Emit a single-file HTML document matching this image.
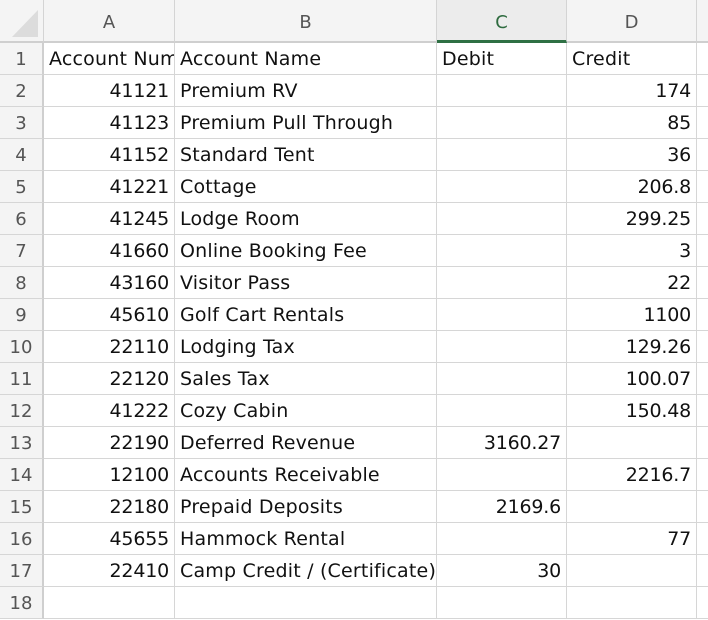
<!DOCTYPE html><html><head><style>
body{margin:0;width:708px;height:596px;overflow:hidden;background:#fff;font-family:"DejaVu Sans","Liberation Sans",sans-serif;position:relative}
.h{position:absolute;top:0;height:43px;background:#f4f4f4;border-right:1px solid #d4d4d4;border-bottom:2px solid #cfcfcf;box-sizing:border-box;text-align:center;line-height:46px;font-size:18px;color:#555}
.rh{position:absolute;left:0;width:44px;height:32px;background:#f4f4f4;border-right:2px solid #cfcfcf;border-bottom:1px solid #d6d6d6;box-sizing:border-box;text-align:center;line-height:33px;font-size:18px;color:#555}
.c{position:absolute;height:32px;border-right:1px solid #d6d6d6;border-bottom:1px solid #d6d6d6;box-sizing:border-box;line-height:33px;font-size:19px;color:#111;white-space:nowrap;overflow:hidden;padding:0 5px 0 5px;letter-spacing:0.2px}
.r{text-align:right;letter-spacing:-0.2px}
</style></head><body>
<div class="h" style="left:0;width:44px"><svg width="44" height="43" style="position:absolute;left:0;top:0"><polygon points="12,37 38,37 38,10" fill="#dcdcdc"/></svg></div>
<div class="h" style="left:44px;width:131px">A</div>
<div class="h" style="left:175px;width:262px">B</div>
<div class="h" style="left:437px;width:130px;color:#2e6b3f;border-bottom:3px solid #2e7044;background:#ececec">C</div>
<div class="h" style="left:567px;width:130px">D</div>
<div class="h" style="left:697px;width:20px"></div>
<div id="g"></div>
<script>
var d=[["Account Num","Account Name","Debit","Credit"],
["41121","Premium RV","","174"],["41123","Premium Pull Through","","85"],["41152","Standard Tent","","36"],["41221","Cottage","","206.8"],["41245","Lodge Room","","299.25"],["41660","Online Booking Fee","","3"],["43160","Visitor Pass","","22"],["45610","Golf Cart Rentals","","1100"],["22110","Lodging Tax","","129.26"],["22120","Sales Tax","","100.07"],["41222","Cozy Cabin","","150.48"],["22190","Deferred Revenue","3160.27",""],["12100","Accounts Receivable","","2216.7"],["22180","Prepaid Deposits","2169.6",""],["45655","Hammock Rental","","77"],["22410","Camp Credit / (Certificate)","30",""],["","","",""]];
var cols=[[44,131],[175,262],[437,130],[567,130],[697,20]],h="";
d.forEach(function(r,i){var t=43+i*32;h+='<div class="rh" style="top:'+t+'px">'+(i+1)+'</div>';
for(var j=0;j<5;j++){var v=j<4?r[j]:"";var cls=(i>0&&j!=1)?"c r":"c";
var pad=(i==0&&j==0)||(i==16&&j==1)?";padding-right:0":"";
h+='<div class="'+cls+'" style="top:'+t+'px;left:'+cols[j][0]+'px;width:'+cols[j][1]+'px'+pad+'">'+v+'</div>';}});
document.getElementById('g').innerHTML=h;
</script>
</body></html>
